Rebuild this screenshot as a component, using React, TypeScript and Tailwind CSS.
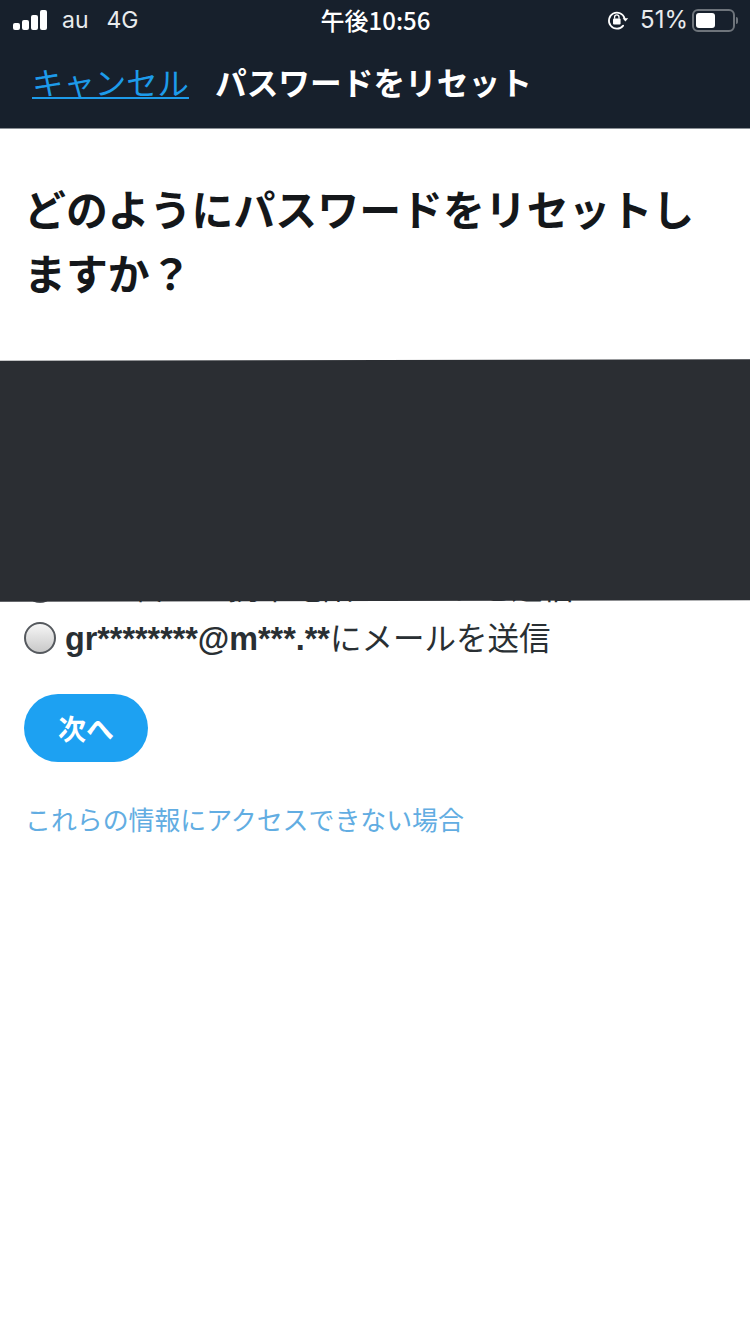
const jp = "font-['Noto_Sans_CJK_JP','Noto_Sans_CJK_SC',sans-serif]";

function SignalBars() {
  return (
    <div className="flex items-end gap-[2px]">
      <span className="h-[7px] w-[7px] rounded-[2px] bg-white" />
      <span className="h-[10px] w-[7px] rounded-[2px] bg-white" />
      <span className="h-[15px] w-[7px] rounded-[2px] bg-white" />
      <span className="h-[20px] w-[7px] rounded-[2px] bg-white" />
    </div>
  );
}

function RotationLock() {
  return (
    <svg width="22" height="20" viewBox="0 0 22 20" fill="none">
      <path d="M17.6 8.4A8 8 0 1 0 16.2 15.6" stroke="white" strokeWidth="1.7" strokeLinecap="round" />
      <path d="M15.6 8.2h5.6l-2.8 3.2z" fill="white" />
      <rect x="6" y="8.4" width="7.6" height="6" rx="1" fill="white" />
      <path d="M7.6 8.8V7a2.2 2.2 0 0 1 4.4 0v1.8" stroke="white" strokeWidth="1.3" />
    </svg>
  );
}

function Battery() {
  return (
    <div className="flex items-center gap-[1px]">
      <div className="flex h-[23px] w-[43px] items-center rounded-[6px] border-2 border-[#6e747b] p-[2px]">
        <div className="h-full w-[19px] rounded-[3px] bg-white" />
      </div>
      <span className="h-[7px] w-[2px] rounded-r-full bg-[#6e747b]" />
    </div>
  );
}

function Radio() {
  return (
    <span className="size-[32px] shrink-0 rounded-full border-2 border-[#55595e] bg-gradient-to-b from-[#f6f6f6] to-[#c9c9c9]" />
  );
}

export default function App() {
  return (
    <div className={`relative min-h-[1334px] w-[750px] overflow-hidden bg-white ${jp}`}>
      <header className="h-[129px] border-b border-[#8b9096] bg-[#17202c] text-white">
        <div className="flex h-[40px] items-center justify-between pl-[13px] pr-[12px]">
          <div className="flex w-[260px] items-center">
            <SignalBars />
            <span className="ml-[15px] font-['Inter',sans-serif] text-[23px] text-[#e9ebed]">au</span>
            <span className="ml-[18px] font-['Inter',sans-serif] text-[23px] text-[#e9ebed]">4G</span>
          </div>
          <span className="text-[24px] font-medium">午後10:56</span>
          <div className="flex w-[260px] items-center justify-end">
            <RotationLock />
            <span className="ml-[11px] mr-[4px] font-['Inter',sans-serif] text-[24px] text-[#e9ebed]">51%</span>
            <Battery />
          </div>
        </div>
        <div className="flex h-[84px] items-center pl-[32px]">
          <a className="text-[31.4px] leading-[40px] text-[#1d9bea] underline decoration-2 underline-offset-2">
            キャンセル
          </a>
          <h2 className="ml-[26px] text-[31.7px] font-bold">パスワードをリセット</h2>
        </div>
      </header>

      <main className="px-[24px]">
        <h1 className="mt-[47px] w-[690px] text-[41.9px] font-bold leading-[64px] text-[#14171a]">
          どのようにパスワードをリセットしますか？
        </h1>

        <div className="mt-[259px] flex items-center gap-[9px] text-[31.5px] leading-[44px] text-[#292f33]">
          <Radio />
          <span>
            <b className="font-['Liberation_Sans',sans-serif]">***</b>で終わる携帯電話にコードを送信
          </span>
        </div>

        <div className="mt-[4px] flex items-center gap-[9px] text-[31.5px] leading-[44px] text-[#292f33]">
          <Radio />
          <span>
            <b className="font-['Liberation_Sans',sans-serif] text-[32.3px]">gr********@m***.**</b>にメールを送信
          </span>
        </div>

        <button className="mt-[33px] h-[68px] w-[124px] rounded-full bg-[#1da1f2] text-[28px] font-bold text-white">
          次へ
        </button>

        <p className="ml-[1px] mt-[37px] text-[25.9px] leading-[40px] text-[#62ade2]">
          これらの情報にアクセスできない場合
        </p>
      </main>

      {/* redaction laid over the other options */}
      <div className="absolute -left-[4px] top-[360px] h-[241px] w-[758px] -rotate-[0.12deg] bg-[#2b2e33]" />
    </div>
  );
}
